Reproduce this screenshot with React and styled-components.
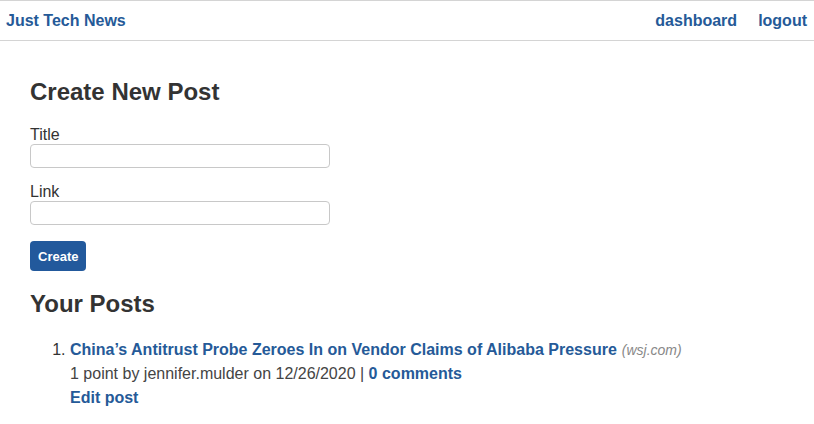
import React from 'react';
import styled, { createGlobalStyle } from 'styled-components';

const GlobalStyle = createGlobalStyle`
  * {
    box-sizing: border-box;
  }

  body {
    margin: 0;
    background: #fff;
    color: #333;
    font-family: "Liberation Sans", Arial, sans-serif;
    font-size: 16px;
  }
`;

const Header = styled.header`
  display: flex;
  justify-content: space-between;
  align-items: center;
  height: 41px;
  padding: 0 7px 0 6px;
  border-top: 1px solid #d4d4d4;
  border-bottom: 1px solid #d4d4d4;
`;

const Brand = styled.a`
  color: #255a98;
  font-weight: bold;
  font-size: 16px;
  text-decoration: none;
`;

const Nav = styled.nav`
  display: flex;
  gap: 21px;
`;

const NavLink = styled.a`
  color: #255a98;
  font-weight: bold;
  font-size: 16px;
  text-decoration: none;
`;

const Main = styled.main`
  padding: 0 30px;
`;

const Heading = styled.h2`
  margin: ${({ $top }) => $top} 0 0;
  font-size: 24px;
  font-weight: bold;
  color: #333;
`;

const Form = styled.form`
  display: flex;
  flex-direction: column;
  align-items: flex-start;
  margin-top: 19px;
`;

const Field = styled.div`
  display: flex;
  flex-direction: column;
  margin-bottom: 14px;
`;

const Label = styled.label`
  font-size: 16px;
  line-height: 19px;
  color: #333;
`;

const Input = styled.input`
  width: 300px;
  height: 24px;
  border: 1px solid #c8c8c8;
  border-radius: 4px;
  font-family: inherit;
  font-size: 14px;
  padding: 2px 6px;
`;

const Button = styled.button`
  height: 30px;
  margin-top: 2px;
  padding: 0 8px;
  background: #22599c;
  color: #fff;
  border: none;
  border-radius: 4px;
  font-family: inherit;
  font-size: 13px;
  font-weight: bold;
`;

const PostList = styled.ol`
  margin: 20px 0 0;
  padding-left: 40px;
`;

const PostItem = styled.li`
  line-height: 24px;
  font-size: 16px;
`;

const Link = styled.a`
  color: #255a98;
  font-weight: bold;
  text-decoration: none;
`;

const Domain = styled.span`
  color: #888;
  font-style: italic;
  font-size: 14px;
  margin-left: 5px;
`;

const Meta = styled.div`
  color: #444;
`;

const posts = [
  {
    id: 1,
    title: 'China\u2019s Antitrust Probe Zeroes In on Vendor Claims of Alibaba Pressure',
    domain: 'wsj.com',
    points: 1,
    user: 'jennifer.mulder',
    date: '12/26/2020',
    comments: 0,
  },
];

export default function App() {
  return (
    <>
      <GlobalStyle />
      <Header>
        <Brand href="#">Just Tech News</Brand>
        <Nav>
          <NavLink href="#">dashboard</NavLink>
          <NavLink href="#">logout</NavLink>
        </Nav>
      </Header>
      <Main>
        <Heading $top="37px">Create New Post</Heading>
        <Form onSubmit={(e) => e.preventDefault()}>
          <Field>
            <Label htmlFor="title">Title</Label>
            <Input id="title" type="text" />
          </Field>
          <Field>
            <Label htmlFor="link">Link</Label>
            <Input id="link" type="text" />
          </Field>
          <Button type="submit">Create</Button>
        </Form>
        <Heading $top="19px">Your Posts</Heading>
        <PostList>
          {posts.map((p) => (
            <PostItem key={p.id}>
              <Link href="#">{p.title}</Link>
              <Domain>({p.domain})</Domain>
              <Meta>
                {p.points} point by {p.user} on {p.date} | <Link href="#">{p.comments} comments</Link>
              </Meta>
              <Link href="#">Edit post</Link>
            </PostItem>
          ))}
        </PostList>
      </Main>
    </>
  );
}
